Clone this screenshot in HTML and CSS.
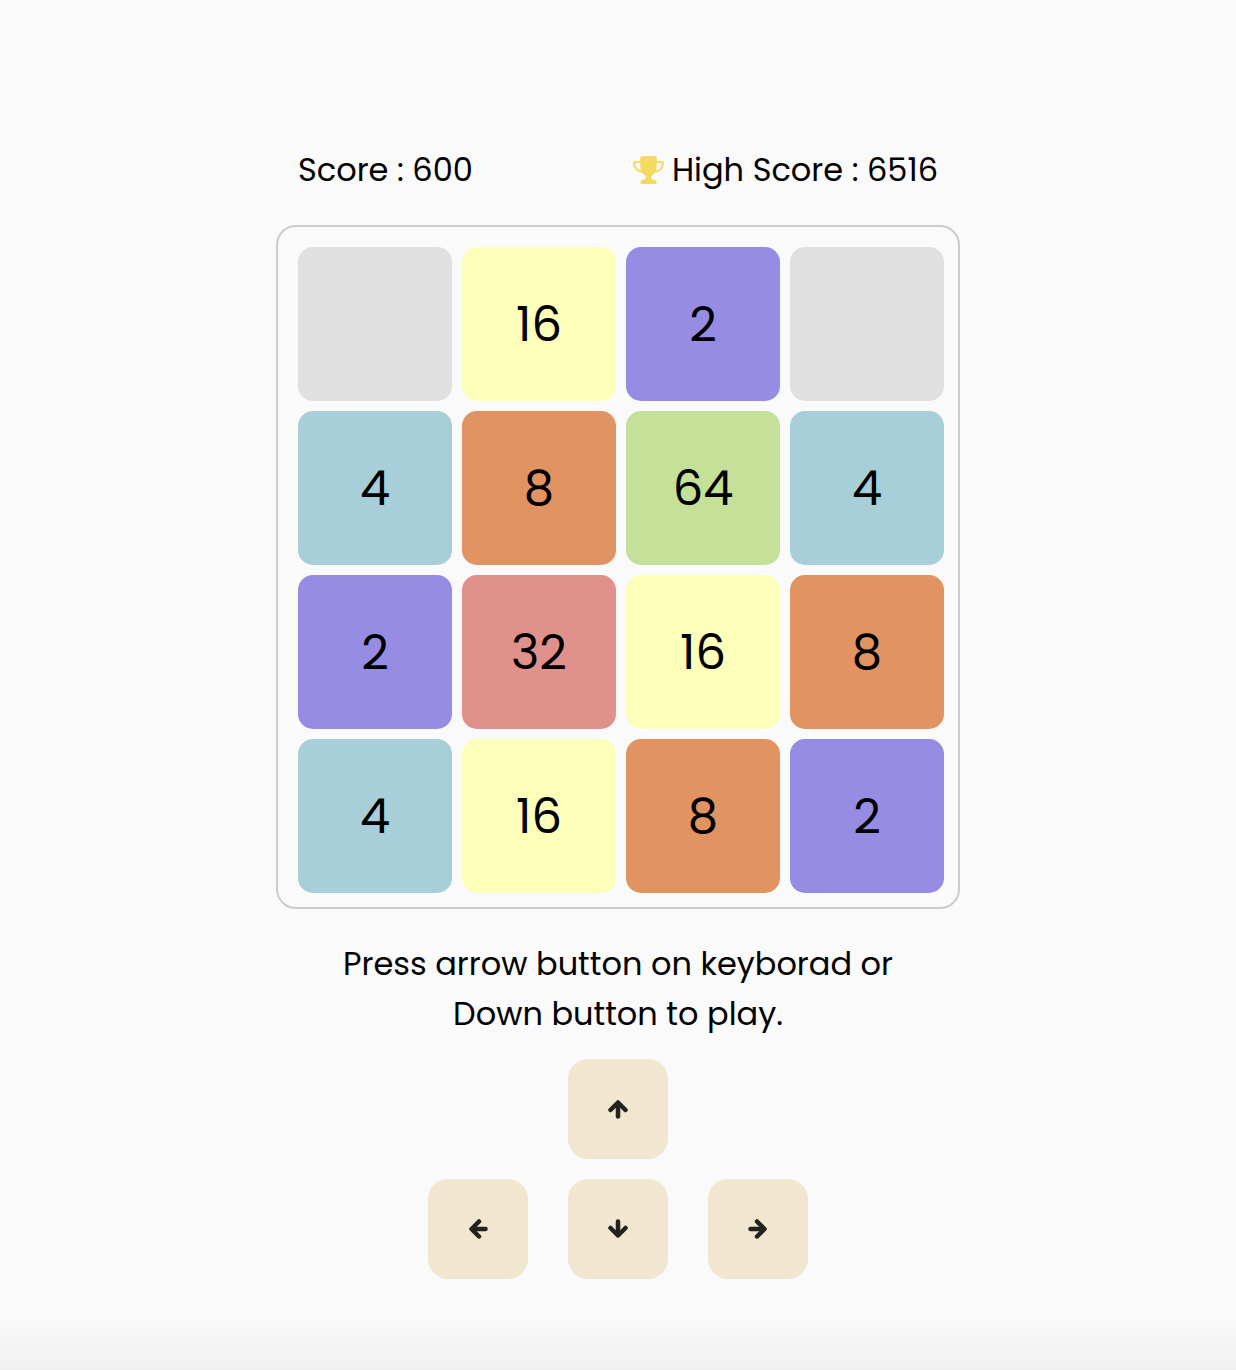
FILE: index.html
```html
<!DOCTYPE html>
<html lang="en">
<head>
<meta charset="utf-8">
<meta name="viewport" content="width=device-width, initial-scale=1">
<title>2048</title>
<link rel="stylesheet" href="styles.css">
</head>
<body>
<main class="game">
  <header class="scores">
    <p class="score">Score : 600</p>
    <p class="score">
      <svg class="trophy" viewBox="0 0 31 29" aria-hidden="true">
        <path d="M9.500 0h12q2.300 0 2.300 2v7.500c0 5-2 8.200-5 10.300-1 .8-1 1.500-.6 2.200.5 1 1.600 1.500 2.800 1.700q2.500.4 2.500 2.500v1q0 .8-.8.800H8.300q-.8 0-.8-.8v-1q0-2.100 2.500-2.500c1.200-.2 2.300-.7 2.800-1.700.4-.7.400-1.400-.6-2.200-3-2.100-5-5.300-5-10.300V2q0-2 2.300-2z" fill="#f5da62"/>
        <path d="M8 6H2.500Q1.200 6 1.200 7.300C1.200 12 4.500 15.500 9.500 16M23 6h5.500q1.300 0 1.300 1.300c0 4.700-3.300 8.200-8.300 8.700" fill="none" stroke="#f5da62" stroke-width="2.200"/>
      </svg>
      High Score : 6516
    </p>
  </header>

  <section class="board" aria-label="Board">
    <div class="tile"></div>
    <div class="tile tile-16">16</div>
    <div class="tile tile-2">2</div>
    <div class="tile"></div>
    <div class="tile tile-4">4</div>
    <div class="tile tile-8">8</div>
    <div class="tile tile-64">64</div>
    <div class="tile tile-4">4</div>
    <div class="tile tile-2">2</div>
    <div class="tile tile-32">32</div>
    <div class="tile tile-16">16</div>
    <div class="tile tile-8">8</div>
    <div class="tile tile-4">4</div>
    <div class="tile tile-16">16</div>
    <div class="tile tile-8">8</div>
    <div class="tile tile-2">2</div>
  </section>

  <p class="hint">Press arrow button on keyborad or<br>Down button to play.</p>

  <div class="controls">
    <button class="key key-up" type="button" aria-label="Up">
      <svg class="arrow" viewBox="0 0 20 20" aria-hidden="true"><path d="M2.500 11 10 3.500l7.500 7.500"/><path d="M10 5v12.500"/></svg>
    </button>
    <button class="key" type="button" aria-label="Left">
      <svg class="arrow arrow-left" viewBox="0 0 20 20" aria-hidden="true"><path d="M2.500 11 10 3.500l7.500 7.500"/><path d="M10 5v12.500"/></svg>
    </button>
    <button class="key" type="button" aria-label="Down">
      <svg class="arrow arrow-down" viewBox="0 0 20 20" aria-hidden="true"><path d="M2.500 11 10 3.500l7.500 7.500"/><path d="M10 5v12.500"/></svg>
    </button>
    <button class="key" type="button" aria-label="Right">
      <svg class="arrow arrow-right" viewBox="0 0 20 20" aria-hidden="true"><path d="M2.500 11 10 3.500l7.500 7.500"/><path d="M10 5v12.500"/></svg>
    </button>
  </div>
</main>
</body>
</html>
```

FILE: styles.css
```css
* {
  box-sizing: border-box;
}

body {
  margin: 0;
  min-height: 100vh;
  background: linear-gradient(to top, #f0f0f0, #fafafa 56px) #fafafa;
  color: #000;
  font-family: Poppins, Inter, sans-serif;
  font-size: 32px;
  line-height: 50px;
}

.game {
  display: flex;
  flex-direction: column;
  align-items: center;
  width: 100%;
  max-width: 684px;
  margin: 0 auto;
  padding: 145px 0 91px;
}

.scores {
  display: flex;
  justify-content: space-between;
  width: 100%;
  padding: 0 22px;
  margin-bottom: 30px;
}

.score {
  display: flex;
  align-items: center;
  gap: 8px;
  margin: 0;
}

.trophy {
  width: 31px;
  height: 29px;
}

.board {
  display: grid;
  grid-template-columns: repeat(4, 1fr);
  gap: 10px;
  width: 100%;
  padding: 20px 14px 14px 20px;
  border: 2px solid #ccc;
  border-radius: 20px;
}

.tile {
  display: flex;
  align-items: center;
  justify-content: center;
  aspect-ratio: 1;
  padding-top: 2px;
  border-radius: 15px;
  background: #e0e0e0;
  font-size: 48px;
}

.tile-2 {
  background: #978ce4;
}

.tile-4 {
  background: #a7ced9;
}

.tile-8 {
  background: #e29362;
}

.tile-16 {
  background: #fcffb9;
}

.tile-32 {
  background: #e1918c;
}

.tile-64 {
  background: #c5e098;
}

.hint {
  margin: 30px 0 20px;
  text-align: center;
}

.controls {
  display: grid;
  grid-template-columns: repeat(3, 100px);
  gap: 20px 40px;
}

.key {
  display: flex;
  align-items: center;
  justify-content: center;
  height: 100px;
  padding: 0;
  border: 0;
  border-radius: 20px;
  background: #f1e6d0;
  color: #22221e;
  cursor: pointer;
}

.key-up {
  grid-column: 2;
}

.key-up + .key {
  grid-column: 1;
}

.arrow {
  width: 20px;
  height: 20px;
  fill: none;
  stroke: currentColor;
  stroke-width: 4.500;
  stroke-linecap: round;
  stroke-linejoin: round;
}

.arrow-left {
  transform: rotate(-90deg);
}

.arrow-down {
  transform: rotate(180deg);
}

.arrow-right {
  transform: rotate(90deg);
}
```
